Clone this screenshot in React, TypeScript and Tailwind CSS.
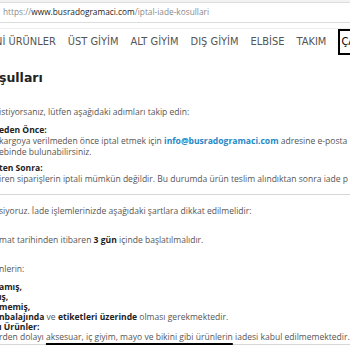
const body = "font-['Open_Sans',sans-serif] text-[8.55px] text-[#555]";

function Line({ children, className = "" }: { children: React.ReactNode; className?: string }) {
  return <p className={`whitespace-nowrap ${className}`}>{children}</p>;
}

export default function App() {
  const nav = ["Nİ ÜRÜNLER", "ÜST GİYİM", "ALT GİYİM", "DIŞ GİYİM", "ELBİSE", "TAKIM"];
  return (
    <div className="h-[350px] w-[350px] overflow-hidden bg-white">
      <div className="bg-[#f3f3f3] pt-[2px]">
        <div className="flex h-[21px] items-center border-y border-[#dcdcdc] bg-white pl-[3px] font-['Open_Sans',sans-serif] text-[8.3px] text-[#8a8a8a]">
          https://<span className="text-[#222]">www.busradogramaci.com</span>/iptal-iade-kosullari
        </div>
      </div>
      <div className="h-[6px] border-b border-[#eeeeee]" />

      <nav className="-ml-[5px] flex h-[26px] items-center gap-[12px] whitespace-nowrap font-['DejaVu_Sans',sans-serif] text-[9.9px] text-[#555]">
        {nav.map((n) => (
          <span key={n}>{n}</span>
        ))}
        <span className="border-2 border-black py-[4px] pl-[1px] text-black">ÇAB</span>
      </nav>

      <h1 className="-ml-[1px] mt-[14px] font-['DejaVu_Sans',sans-serif] text-[12.5px] font-bold text-[#222]">şulları</h1>

      <div className={`${body} -ml-[1px] mt-[19px] leading-[10.6px]`}>
        <Line>istiyorsanız, lütfen aşağıdaki adımları takip edin:</Line>
        <Line className="mt-[8px] font-bold text-[#222]">eden Önce:</Line>
        <Line>
          kargoya verilmeden önce iptal etmek için{" "}
          <span className="font-bold text-[#1e88c7]">info@busradogramaci.com</span> adresine e-posta
        </Line>
        <Line>ebinde bulunabilirsiniz.</Line>
        <Line className="mt-[6px] font-bold text-[#222]">ten Sonra:</Line>
        <Line>iren siparişlerin iptali mümkün değildir. Bu durumda ürün teslim alındıktan sonra iade p</Line>

        <div className="mt-[10px] h-px bg-[#d8d8d8]" />

        <Line className="mt-[11px]">siyoruz. İade işlemlerinizde aşağıdaki şartlara dikkat edilmelidir:</Line>
        <Line className="mt-[18px]">
          mat tarihinden itibaren <b className="text-[#222]">3 gün</b> içinde başlatılmalıdır.
        </Line>
        <Line className="mt-[18px]">nlerin:</Line>

        <div className="mt-[8px] leading-[10px]">
          <Line className="font-bold text-[#222]">amış,</Line>
          <Line className="font-bold text-[#222]">ış,</Line>
          <Line className="font-bold text-[#222]">memiş,</Line>
          <Line>
            <b className="text-[#222]">nbalajında</b> ve <b className="text-[#222]">etiketleri üzerinde</b> olması gerekmektedir.
          </Line>
          <Line className="font-bold text-[#222]">ı Ürünler:</Line>
          <Line>
            rden dolayı <span className="underline decoration-black decoration-2 underline-offset-[3px]">aksesuar, iç giyim, mayo ve bikini gibi ürünlerin</span> iadesi kabul edilmemektedir.
          </Line>
        </div>
        <div className="mt-[2px] h-px bg-[#d8d8d8]" />
      </div>
    </div>
  );
}
